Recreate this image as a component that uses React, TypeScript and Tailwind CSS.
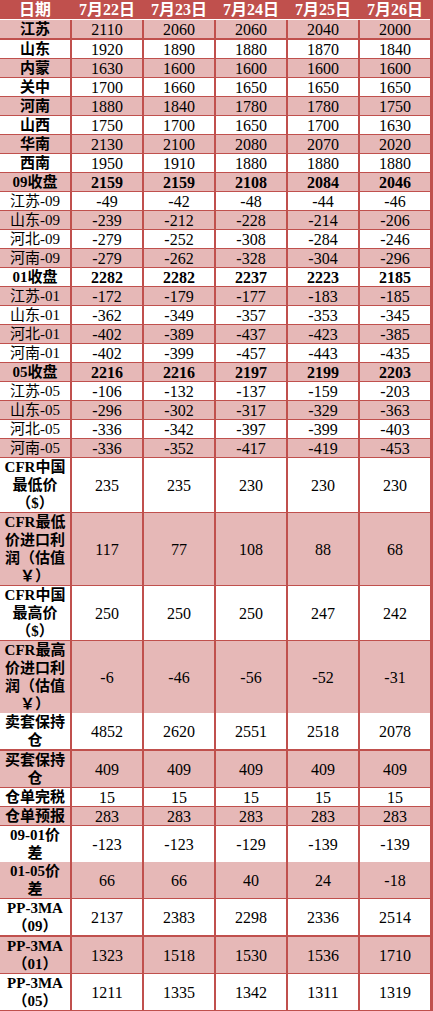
import React from "react";

type Row = {
  label: string[];
  vals: string[];
  h: string;
  bold?: boolean;
  labelBold?: boolean;
};

const R = (
  label: string[],
  vals: string[],
  h: string,
  labelBold = true,
  bold = false
): Row => ({ label, vals, h, labelBold, bold });

const rows: Row[] = [
  R(["江苏"], ["2110", "2060", "2060", "2040", "2000"], "h-[18px]"),
  R(["山东"], ["1920", "1890", "1880", "1870", "1840"], "h-[17px]"),
  R(["内蒙"], ["1630", "1600", "1600", "1600", "1600"], "h-[17px]"),
  R(["关中"], ["1700", "1660", "1650", "1650", "1650"], "h-[17px]"),
  R(["河南"], ["1880", "1840", "1780", "1780", "1750"], "h-[17px]"),
  R(["山西"], ["1750", "1700", "1650", "1700", "1630"], "h-[17px]"),
  R(["华南"], ["2130", "2100", "2080", "2070", "2020"], "h-[17px]"),
  R(["西南"], ["1950", "1910", "1880", "1880", "1880"], "h-[17px]"),
  R(["09收盘"], ["2159", "2159", "2108", "2084", "2046"], "h-[17px]", true, true),
  R(["江苏-09"], ["-49", "-42", "-48", "-44", "-46"], "h-[17px]", false),
  R(["山东-09"], ["-239", "-212", "-228", "-214", "-206"], "h-[17px]", false),
  R(["河北-09"], ["-279", "-252", "-308", "-284", "-246"], "h-[17px]", false),
  R(["河南-09"], ["-279", "-262", "-328", "-304", "-296"], "h-[17px]", false),
  R(["01收盘"], ["2282", "2282", "2237", "2223", "2185"], "h-[17px]", true, true),
  R(["江苏-01"], ["-172", "-179", "-177", "-183", "-185"], "h-[17px]", false),
  R(["山东-01"], ["-362", "-349", "-357", "-353", "-345"], "h-[17px]", false),
  R(["河北-01"], ["-402", "-389", "-437", "-423", "-385"], "h-[17px]", false),
  R(["河南-01"], ["-402", "-399", "-457", "-443", "-435"], "h-[17px]", false),
  R(["05收盘"], ["2216", "2216", "2197", "2199", "2203"], "h-[17px]", true, true),
  R(["江苏-05"], ["-106", "-132", "-137", "-159", "-203"], "h-[17px]", false),
  R(["山东-05"], ["-296", "-302", "-317", "-329", "-363"], "h-[17px]", false),
  R(["河北-05"], ["-336", "-342", "-397", "-399", "-403"], "h-[17px]", false),
  R(["河南-05"], ["-336", "-352", "-417", "-419", "-453"], "h-[17px]", false),
  R(["CFR中国", "最低价", "（$）"], ["235", "235", "230", "230", "230"], "h-[53px]"),
  R(["CFR最低", "价进口利", "润（估值", "￥）"], ["117", "77", "108", "88", "68"], "h-[71px]"),
  R(["CFR中国", "最高价", "（$）"], ["250", "250", "250", "247", "242"], "h-[53px]"),
  R(["CFR最高", "价进口利", "润（估值", "￥）"], ["-6", "-46", "-56", "-52", "-31"], "h-[70px]"),
  R(["卖套保持", "仓"], ["4852", "2620", "2551", "2518", "2078"], "h-[36px]"),
  R(["买套保持", "仓"], ["409", "409", "409", "409", "409"], "h-[35px]"),
  R(["仓单完税"], ["15", "15", "15", "15", "15"], "h-[17px]"),
  R(["仓单预报"], ["283", "283", "283", "283", "283"], "h-[17px]"),
  R(["09-01价", "差"], ["-123", "-123", "-129", "-139", "-139"], "h-[34px]"),
  R(["01-05价", "差"], ["66", "66", "40", "24", "-18"], "h-[35px]"),
  R(["PP-3MA", "（09）"], ["2137", "2383", "2298", "2336", "2514"], "h-[36px]"),
  R(["PP-3MA", "（01）"], ["1323", "1518", "1530", "1536", "1710"], "h-[35px]"),
  R(["PP-3MA", "（05）"], ["1211", "1335", "1342", "1311", "1319"], "h-[34px]"),
];

const dates = ["7月22日", "7月23日", "7月24日", "7月25日", "7月26日"];

export default function App() {
  return (
    <div
      className="w-[433px] bg-[#c0504d] pr-[3px] pb-[3px] text-black"
      style={{ fontFamily: '"Liberation Serif", "Noto Sans CJK SC", serif' }}
    >
      <div className="grid h-[19px] grid-cols-[70px_70px_70px_70px_70px_70px] gap-x-[2px] text-[16px] font-bold leading-[19px] text-white">
        <div className="text-center">日期</div>
        {dates.map((d) => (
          <div key={d} className="text-center whitespace-nowrap">
            {d}
          </div>
        ))}
      </div>
      <div className="h-[1px] bg-white" />
      <div className="flex flex-col gap-[2px]">
        {rows.map((r, i) => {
          const bg = i % 2 === 0 ? "bg-[#e6b8b7]" : "bg-white";
          return (
            <div
              key={i}
              className={`grid grid-cols-[70px_70px_70px_70px_70px_70px] gap-x-[2px] ${r.h}`}
            >
              <div
                className={`flex flex-col items-center justify-center text-center text-[15px] leading-[18px] whitespace-nowrap ${bg} ${
                  r.labelBold ? "font-bold" : "font-normal"
                }`}
              >
                {r.label.map((l, j) => (
                  <span key={j} className="block">
                    {l}
                  </span>
                ))}
              </div>
              {r.vals.map((v, j) => (
                <div
                  key={j}
                  className={`flex items-center justify-center text-[16px] leading-[17px] ${bg} ${
                    r.bold ? "font-bold" : "font-normal"
                  }`}
                >
                  {v}
                </div>
              ))}
            </div>
          );
        })}
      </div>
    </div>
  );
}
